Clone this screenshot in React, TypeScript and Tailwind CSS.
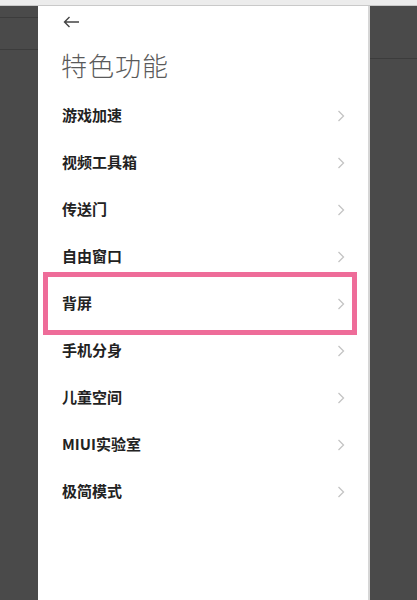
import React from 'react';

const items = ['游戏加速', '视频工具箱', '传送门', '自由窗口', '背屏', '手机分身', '儿童空间', 'MIUI实验室', '极简模式'];

const Chevron: React.FC = () => (
  <svg width="8" height="12" viewBox="0 0 8 12" fill="none">
    <path d="M1.5 1 L6.5 6 L1.5 11" stroke="#c4c4c4" strokeWidth="1.3" />
  </svg>
);

export default function App() {
  return (
    <div
      className="w-[417px] h-[600px] overflow-hidden flex flex-col bg-[#4a4a4a]"
      style={{ fontFamily: '"Noto Sans CJK SC", "Noto Sans", sans-serif' }}
    >
      {/* top strip */}
      <div className="h-[6px] shrink-0 bg-[#ececec] border-b border-[#c9c9c9]" />
      <div className="flex flex-1">
        {/* left backdrop */}
        <div className="w-[38px] flex flex-col">
          <div className="h-[11px]" />
          <div className="h-[33px] border-t border-b border-[#3c3c3c]" />
        </div>

        {/* phone screen */}
        <div className="w-[332px] bg-white border-r-2 border-[#d6d6d6] flex flex-col">
          <div className="h-[30px] flex items-center pl-[25px] pt-[2px]">
            <svg width="17" height="12" viewBox="0 0 17 12" fill="none">
              <path d="M16 6 H1.5 M6.5 1 L1.5 6 L6.5 11" stroke="#444" strokeWidth="1.4" />
            </svg>
          </div>
          <div className="h-[56px] flex items-center pl-[23px]">
            <span className="text-[26px] font-light text-[#5a5a5a] tracking-[1px]">特色功能</span>
          </div>
          <div className="flex flex-col">
            {items.map((name) =>
              name === '背屏' ? (
                <div
                  key={name}
                  className="h-[47px] flex items-center justify-between pl-[14px] pr-[7px] ml-[5px] mr-[11px] border-[5px] border-[#ee6c99] -my-[8px] box-content py-[3px] relative"
                >
                  <span className="text-[15px] font-bold text-[#222]">{name}</span>
                  <Chevron />
                </div>
              ) : (
                <div key={name} className="h-[47px] flex items-center justify-between pl-[24px] pr-[23px]">
                  <span className="text-[15px] font-bold text-[#222]">{name}</span>
                  <Chevron />
                </div>
              )
            )}
          </div>
        </div>

        {/* right backdrop */}
        <div className="flex-1 flex flex-col">
          <div className="h-[53px] border-b border-[#3c3c3c]" />
        </div>
      </div>
    </div>
  );
}
